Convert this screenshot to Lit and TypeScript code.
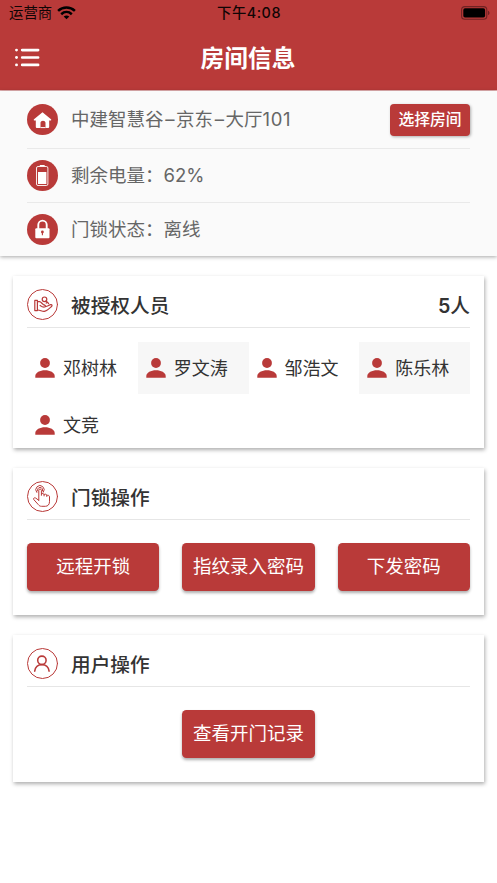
import { LitElement, html, css, svg } from "lit";
import { customElement } from "lit/decorators.js";

const people = ["邓树林", "罗文涛", "邹浩文", "陈乐林", "文竞"];

const person = svg`<circle cx="10" cy="5" r="4.900"/><path d="M.3 19.700V18C.3 14.500 5 12.200 10 12.200S19.700 14.500 19.700 18v1.700Z"/>`;

@customElement("app-root")
export class AppRoot extends LitElement {
  static styles = css`
    :host {
      display: block;
      width: 497px;
      height: 883px;
      overflow: hidden;
      background: #fff;
      font-family: Inter, "Noto Sans CJK SC", sans-serif;
      color: #333;
    }
    * { box-sizing: border-box; }
    svg { display: block; flex: none; }
    .top {
      height: 91px;
      background: #b93a39;
      border-bottom: 1px solid #e3b0b1;
    }
    .status {
      display: grid;
      grid-template-columns: 1fr auto 1fr;
      align-items: center;
      height: 26px;
      padding: 0 7px 0 9px;
      color: #100505;
      font-size: 14.400px;
      line-height: 26px;
    }
    .carrier { display: flex; align-items: center; gap: 5px; }
    .clock { font-weight: 500; letter-spacing: 0.500px; margin-right: 1px; }
    .battery { justify-self: end; }
    .nav {
      display: grid;
      grid-template-columns: 1fr auto 1fr;
      align-items: center;
      height: 64px;
      padding: 0 16px 0 15px;
    }
    .title {
      margin: 0;
      color: #fff;
      font-size: 23.700px;
      font-weight: 600;
      line-height: 66px;
      height: 64px;
    }
    .info {
      height: 165px;
      padding: 0 27px;
      background: #fafafa;
      box-shadow: 0 1px 4px rgba(0, 0, 0, 0.35);
    }
    .row {
      display: flex;
      align-items: center;
      height: 54px;
      gap: 13px;
      color: #666;
      font-size: 18.500px;
      line-height: 28px;
      border-bottom: 1px solid #e9e9e9;
    }
    .row.first { height: 58px; }
    .row.last { height: 53px; border: 0; }
    .label { flex: 1; white-space: nowrap; }
    .row .label { height: 30px; }
    .dash {
      display: inline-block;
      width: 12.500px;
      text-align: center;
    }
    .digits { letter-spacing: 0.600px; }
    .pick {
      width: 80px;
      height: 32px;
      border-radius: 4px;
      background: #b93a39;
      color: #fff;
      font-size: 15.800px;
      font-weight: 500;
      line-height: 31px;
      text-align: center;
      box-shadow: 1px 1px 3px rgba(0, 0, 0, 0.3);
    }
    .card {
      margin: 20px 13px 0;
      padding: 0 14px;
      background: #fff;
      box-shadow: 1px 2px 4px rgba(0, 0, 0, 0.32);
    }
    .people-card { height: 172px; }
    .lock-card { height: 147px; }
    .user-card { height: 147px; }
    .head {
      display: flex;
      align-items: center;
      gap: 13px;
      height: 52px;
      padding-top: 6px;
      border-bottom: 1px solid #e6e6e6;
      font-size: 19.700px;
      font-weight: 500;
      line-height: 32px;
    }
    .head .label { height: 30px; }
    .count { height: 30px; font-weight: 600; }
    .count span { font-weight: 500; }
    .people {
      display: grid;
      grid-template-columns: repeat(4, 1fr);
      row-gap: 5px;
      padding-top: 14px;
    }
    .person {
      display: flex;
      align-items: center;
      height: 52px;
      gap: 8px;
      padding-left: 8px;
      font-size: 18px;
      line-height: 30px;
      white-space: nowrap;
      color: #333;
    }
    .person span { height: 28px; }
    .person:nth-child(2n) { background: #f7f7f7; }
    .actions {
      display: grid;
      grid-template-columns: repeat(3, 1fr);
      gap: 23px;
      padding-top: 23px;
    }
    .action {
      height: 48px;
      border-radius: 4.500px;
      background: #b93a39;
      color: #fff;
      font-size: 18.500px;
      line-height: 46px;
      text-align: center;
      white-space: nowrap;
      box-shadow: 0 2px 3px rgba(0, 0, 0, 0.32);
    }
    .middle { grid-column: 2; }
  `;

  private head(icon: unknown, text: string, count?: number) {
    return html`<div class="head">
      <svg width="31" height="31" viewBox="0 0 31 31" fill="none" stroke="#b93a39" stroke-linecap="round" stroke-linejoin="round">
        <circle cx="15.500" cy="15.500" r="15" stroke-width="1"/>${icon}
      </svg>
      <span class="label">${text}</span>
      ${count ? html`<span class="count">${count}<span>人</span></span>` : ""}
    </div>`;
  }

  private row(cls: string, icon: unknown, text: unknown, button?: string) {
    return html`<div class="row ${cls}">
      <svg width="31" height="31" viewBox="0 0 31 31">
        <circle cx="15.500" cy="15.500" r="15.500" fill="#b93a39"/>${icon}
      </svg>
      <span class="label">${text}</span>
      ${button ? html`<div class="pick">${button}</div>` : ""}
    </div>`;
  }

  render() {
    const home = svg`<path fill="#fff" d="M15.500 8.300 24 15.200c.6.700.1 1.300-.6 1.300h-1.200v6.200c0 .9-.5 1.400-1.400 1.400h-2.300v-5.300c0-2.700-5-2.700-5 0v5.300H10.200c-.9 0-1.400-.5-1.400-1.400v-6.200H7.600c-.7 0-1.200-.6-.6-1.300Z"/><path d="M13.500 23.600h5" stroke="#fff"/>`;
    const cell = svg`<rect x="9.500" y="6.500" width="11.400" height="19" rx="1.500" fill="none" stroke="#fff" stroke-width=".9"/><path d="M12.800 5.600h4.900" stroke="#fff" stroke-width="1.200"/><path d="M11 12h8.400v12H11z" fill="#fff"/>`;
    const lock = svg`<path d="M11.300 15v-4.200a4.200 4.200 0 0 1 8.400 0V15" fill="none" stroke="#fff" stroke-width="1.900"/><rect x="8.300" y="14.200" width="14.200" height="10" rx="1" fill="#fff"/><circle cx="15.400" cy="18" r="1.400" fill="#b93a39"/><path d="M15.400 18v3.300" stroke="#b93a39" stroke-width="1.100"/>`;
    const grant = svg`<g stroke-width="1.200"><path d="M7.800 11.400h2.600v10.200H7.800z"/><path d="M10.600 12.600h2c1.400 0 2.300 2.300 3.900 3 1.700.6 2.500 1.500 1.600 2.200-1 .6-3.300-.1-5-1.300M18.400 17.600c2.100-.1 3.600-1.500 5.300-1.900 1.500-.2 1.700.9.800 1.800-2.200 2.200-4.300 4.500-7.200 4.800-2.400.2-4-1.300-6.700-1.300"/><circle cx="17.500" cy="10.300" r="2.300"/><path d="m19.100 11.900 2.500 2.600m-1.400-1.400-1 .9"/></g>`;
    const touch = svg`<g stroke-width="1"><path d="M11.800 19.200V9.300c0-1.700 2.600-1.700 2.600 0v5M14.400 12.900c.9-.9 2.700-.4 2.700 1v1M17.100 13.500c.9-.8 2.700-.4 2.700 1v1M19.800 14.400c1.200-.6 2.700.1 2.700 1.400v4.900c0 2.800-1.700 4.600-4.100 4.600h-3.900c-1.400 0-2.300-.6-3.200-1.700l-4.500-5c-1-1.300.8-2.400 2.100-1.400l2.900 2.200"/><path d="M9.700 11.400a4.200 4.200 0 1 1 6.700-.2M10.700 10a2.600 2.600 0 1 1 4.800 0"/></g>`;
    const user = svg`<g stroke-width="1.550"><circle cx="14.900" cy="12.300" r="4.200"/><path d="M7.700 23.200c.4-4 3.300-6.600 7.200-6.600s6.800 2.600 7.200 6.600"/></g>`;
    const dash = html`<span class="dash">–</span>`;

    return html`
      <header class="top">
        <div class="status">
          <div class="carrier"><span>运营商</span>
            <svg width="19" height="14" viewBox="0 0 19 14" fill="none" stroke="#000" stroke-width="2.500">
              <path d="M1.100 4.900c4.800-4.500 12-4.500 16.800 0M4.200 8.200c3.100-2.800 7.500-2.800 10.600 0"/>
              <path d="M9.500 13.300 6.700 10.600c1.700-1.500 3.900-1.500 5.600 0Z" fill="#000" stroke="none"/>
            </svg>
          </div>
          <span class="clock">下午4:08</span>
          <svg class="battery" width="29" height="14" viewBox="0 0 29 14">
            <rect x=".6" y=".6" width="25.200" height="12.600" rx="3.300" fill="none" stroke="#702223" stroke-width="1.100"/>
            <rect x="2.300" y="2.300" width="21.800" height="9.200" rx="1.700"/>
            <path d="M27 4.700c2 .7 2 3.700 0 4.400Z" fill="#702223"/>
          </svg>
        </div>
        <div class="nav">
          <svg width="25" height="20" viewBox="0 0 25 20" stroke="#fff" stroke-width="2.700" stroke-linecap="round" fill="#fff">
            <path d="M7.200 2.100h15.900M7.200 9.500h15.900M7.200 16.900h15.900"/>
            <g stroke="none"><circle cx="1.500" cy="2.100" r="1.450"/><circle cx="1.500" cy="9.500" r="1.450"/><circle cx="1.500" cy="16.900" r="1.450"/></g>
          </svg>
          <h1 class="title">房间信息</h1>
        </div>
      </header>
      <section class="info">
        ${this.row("first", home, html`中建智慧谷${dash}京东${dash}大厅<span class="digits">101</span>`, "选择房间")}
        ${this.row("", cell, "剩余电量：62%")}
        ${this.row("last", lock, "门锁状态：离线")}
      </section>
      <section class="card people-card">
        ${this.head(grant, "被授权人员", people.length)}
        <div class="people">
          ${people.map((name) => html`<div class="person">
            <svg width="20" height="20" viewBox="0 0 20 20" fill="#b93a39">${person}</svg><span>${name}</span>
          </div>`)}
        </div>
      </section>
      <section class="card lock-card">
        ${this.head(touch, "门锁操作")}
        <div class="actions">
          <div class="action">远程开锁</div>
          <div class="action">指纹录入密码</div>
          <div class="action">下发密码</div>
        </div>
      </section>
      <section class="card user-card">
        ${this.head(user, "用户操作")}
        <div class="actions"><div class="action middle">查看开门记录</div></div>
      </section>
    `;
  }
}
